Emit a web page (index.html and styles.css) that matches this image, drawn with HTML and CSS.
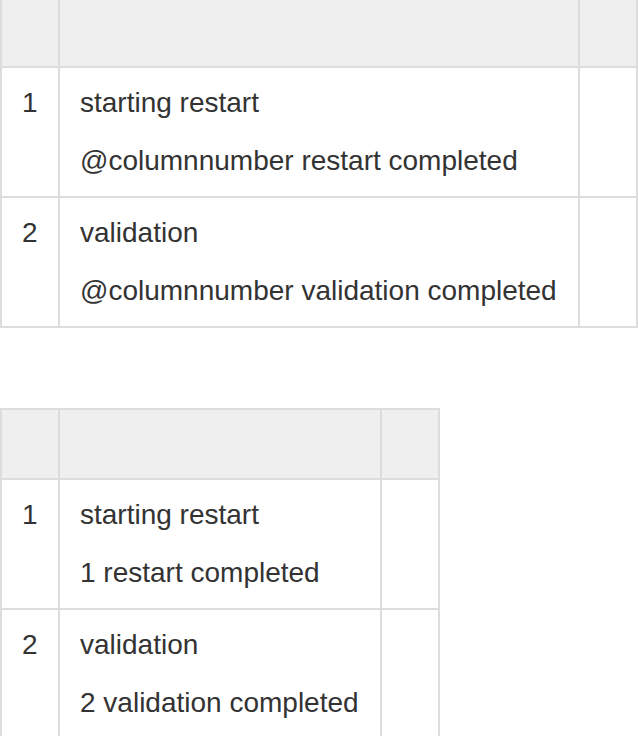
FILE: index.html
```html
<!DOCTYPE html>
<html>
<head>
<meta charset="utf-8">
<link rel="stylesheet" href="styles.css">
</head>
<body>
<table class="grid grid-wide">
  <tr class="head"><td class="num"></td><td class="main"></td><td class="end"></td></tr>
  <tr>
    <td class="num">1</td>
    <td class="main"><div class="line">starting restart</div><div class="line line-2">@columnnumber restart completed</div></td>
    <td class="end"></td>
  </tr>
  <tr>
    <td class="num">2</td>
    <td class="main"><div class="line">validation</div><div class="line line-2">@columnnumber validation completed</div></td>
    <td class="end"></td>
  </tr>
</table>
<table class="grid grid-narrow">
  <tr class="head"><td class="num"></td><td class="main"></td><td class="end"></td></tr>
  <tr>
    <td class="num">1</td>
    <td class="main"><div class="line">starting restart</div><div class="line line-2">1 restart completed</div></td>
    <td class="end"></td>
  </tr>
  <tr>
    <td class="num">2</td>
    <td class="main"><div class="line">validation</div><div class="line line-2">2 validation completed</div></td>
    <td class="end"></td>
  </tr>
</table>
</body>
</html>
```
FILE: styles.css
```css
html, body {
  margin: 0;
  padding: 0;
  background: #fff;
}
body {
  font-family: "Liberation Sans", Arial, sans-serif;
  font-size: 28px;
  color: #333;
}
.grid {
  border-collapse: separate;
  border-spacing: 0;
  table-layout: fixed;
  border-left: 2px solid #ddd;
  border-top: 2px solid #ddd;
}
.grid-wide {
  width: 638px;
  margin-top: -4px;
}
.grid-narrow {
  width: 440px;
  margin-top: 80px;
}
.grid td {
  box-sizing: border-box;
  border-right: 2px solid #ddd;
  border-bottom: 2px solid #ddd;
  vertical-align: top;
  padding: 20px 0 20px 20px;
}
.grid .num { width: 58px; }
.grid .end { width: 58px; }
.head td {
  background: #efefef;
  height: 70px;
}
.line {
  line-height: 30px;
  white-space: nowrap;
}
.line-2 {
  margin-top: 28px;
}
.num {
  line-height: 30px;
}
```
